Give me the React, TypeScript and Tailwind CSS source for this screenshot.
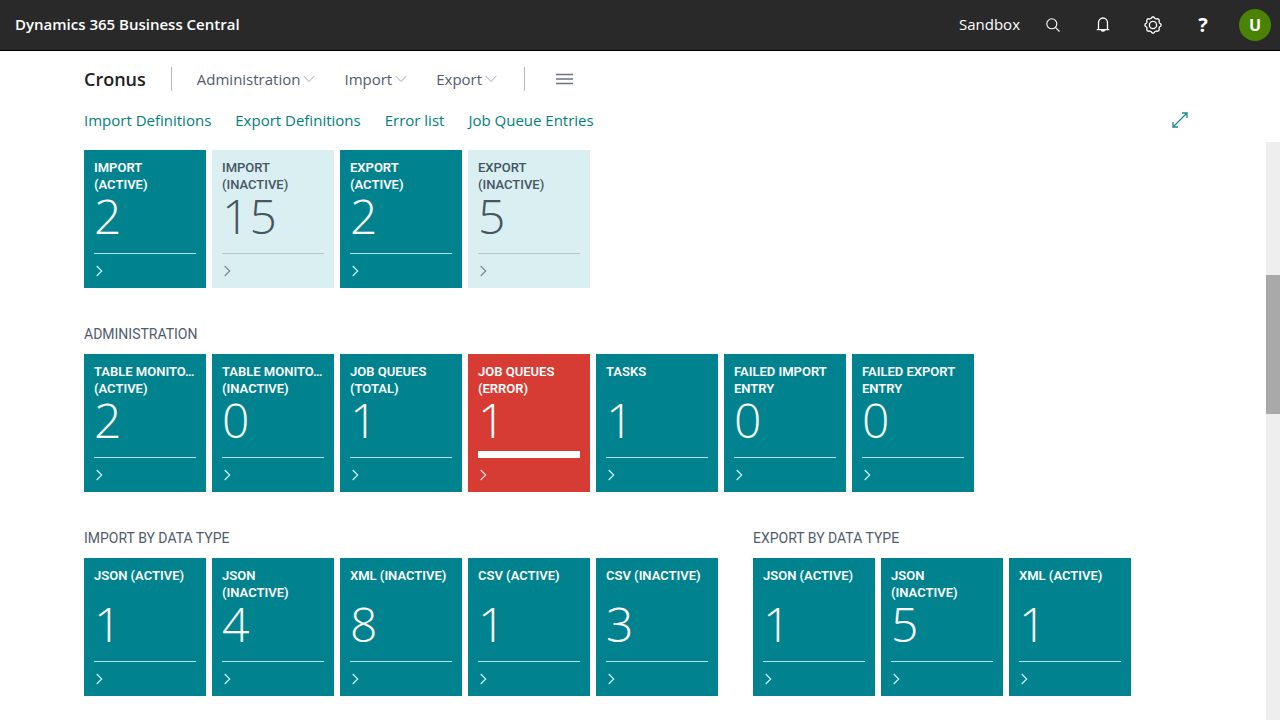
type Tone = 'active' | 'muted' | 'alert';

type Cue = {
  label: string[];
  value: number;
  tone?: Tone;
};

const definitions: Cue[] = [
  { label: ['IMPORT', '(ACTIVE)'], value: 2 },
  { label: ['IMPORT', '(INACTIVE)'], value: 15, tone: 'muted' },
  { label: ['EXPORT', '(ACTIVE)'], value: 2 },
  { label: ['EXPORT', '(INACTIVE)'], value: 5, tone: 'muted' },
];

const administration: Cue[] = [
  { label: ['TABLE MONITO…', '(ACTIVE)'], value: 2 },
  { label: ['TABLE MONITO…', '(INACTIVE)'], value: 0 },
  { label: ['JOB QUEUES', '(TOTAL)'], value: 1 },
  { label: ['JOB QUEUES', '(ERROR)'], value: 1, tone: 'alert' },
  { label: ['TASKS'], value: 1 },
  { label: ['FAILED IMPORT', 'ENTRY'], value: 0 },
  { label: ['FAILED EXPORT', 'ENTRY'], value: 0 },
];

const importTypes: Cue[] = [
  { label: ['JSON (ACTIVE)'], value: 1 },
  { label: ['JSON', '(INACTIVE)'], value: 4 },
  { label: ['XML (INACTIVE)'], value: 8 },
  { label: ['CSV (ACTIVE)'], value: 1 },
  { label: ['CSV (INACTIVE)'], value: 3 },
];

const exportTypes: Cue[] = [
  { label: ['JSON (ACTIVE)'], value: 1 },
  { label: ['JSON', '(INACTIVE)'], value: 5 },
  { label: ['XML (ACTIVE)'], value: 1 },
];

const tileTone: Record<Tone, string> = {
  active: 'bg-[#00838f] text-white',
  muted: 'bg-[#d9eff2] text-[#46555f]',
  alert: 'bg-[#d63c34] text-white',
};

const ruleTone: Record<Tone, string> = {
  active: 'h-px bg-[#b5e3e8]',
  muted: 'h-px bg-[#b3c5c9]',
  alert: 'h-[7px] bg-white',
};

const labelTone: Record<Tone, string> = {
  active: 'font-semibold',
  muted: 'font-medium',
  alert: 'font-semibold',
};

const chevronTone: Record<Tone, string> = {
  active: 'text-[#d3eef1]',
  muted: 'text-[#7d8c94]',
  alert: 'text-[#fbdedb]',
};

function Tile({ cue }: { cue: Cue }) {
  const tone = cue.tone ?? 'active';
  return (
    <a
      href="#"
      className={`flex h-[138px] w-[122px] shrink-0 flex-col px-[10px] pt-[9px] ${tileTone[tone]}`}
    >
      <span
        className={`h-[34px] font-['Roboto',sans-serif] text-[13px] leading-[17px] whitespace-nowrap ${labelTone[tone]}`}
      >
        {cue.label.map((line) => (
          <span key={line} className="block">
            {line}
          </span>
        ))}
      </span>
      <span className="h-[46px] font-['Open_Sans',sans-serif] text-[48px] leading-[46px] font-light">
        {cue.value}
      </span>
      <span className="flex h-[15px] flex-col justify-end">
        <span className={`block ${ruleTone[tone]}`} />
      </span>
      <svg
        viewBox="0 0 10 12"
        className={`mt-[11px] h-3 w-[10px] ${chevronTone[tone]}`}
        fill="none"
        stroke="currentColor"
        strokeWidth="1.2"
        aria-hidden="true"
      >
        <path d="M2.7 1 7.7 6 2.7 11" />
      </svg>
    </a>
  );
}

function Tiles({ title, cues }: { title?: string; cues: Cue[] }) {
  return (
    <section>
      {title && (
        <h2 className="mb-[10px] font-['Roboto',sans-serif] text-sm leading-5 text-[#505c6d]">
          {title}
        </h2>
      )}
      <div className="flex gap-[6px]">
        {cues.map((cue) => (
          <Tile key={cue.label.join(' ')} cue={cue} />
        ))}
      </div>
    </section>
  );
}

function MenuButton({ children }: { children: string }) {
  return (
    <button type="button" className="flex items-center gap-[3px] text-[#505c6d]">
      {children}
      <svg
        viewBox="0 0 12 8"
        className="h-2 w-3"
        fill="none"
        stroke="#a3a9b1"
        aria-hidden="true"
      >
        <path d="M.7 1 6 6.5 11.3 1" />
      </svg>
    </button>
  );
}

/* Cog outline: a ring with eight rounded lobes. */
const cogPath = (() => {
  const points: string[] = [];
  for (let i = 0; i < 96; i += 1) {
    const angle = (i / 96) * Math.PI * 2;
    const radius = 7.4 + 0.7 * Math.tanh(1.5 * Math.cos(angle * 8));
    points.push(
      `${(9 + radius * Math.cos(angle)).toFixed(2)} ${(9 + radius * Math.sin(angle)).toFixed(2)}`,
    );
  }
  return `M${points.join('L')}Z`;
})();

const iconButton = 'flex h-full w-[50px] items-center justify-center';

function TopBar() {
  return (
    <header className="flex h-[51px] items-center border-b border-black bg-[#292929] pr-[9px] pl-[15px] text-white">
      <h1 className="-mt-[2px] text-[15px] leading-5 font-semibold">
        Dynamics 365 Business Central
      </h1>
      <span className="-mt-[2px] mr-2 ml-auto text-[15px] leading-5">Sandbox</span>
      <button type="button" aria-label="Search" className={iconButton}>
        <svg viewBox="0 0 14 14" className="size-[14px]" fill="none" stroke="currentColor" strokeWidth="1.1">
          <circle cx="5.8" cy="5.8" r="5" />
          <path d="m9.4 9.4 4.1 4.1" />
        </svg>
      </button>
      <button type="button" aria-label="Notifications" className={iconButton}>
        <svg viewBox="0 0 14 16" className="h-4 w-[14px]" fill="none" stroke="currentColor" strokeWidth="1.3">
          <path d="M.7 12.7h12.6M2.5 12.7V5.8a4.5 4.8 0 0 1 9 0v6.9M5.3 13a1.8 1.8 0 0 0 3.4 0" />
        </svg>
      </button>
      <button type="button" aria-label="Settings" className={iconButton}>
        <svg viewBox="0 0 18 18" className="size-[18px]" fill="none" stroke="currentColor" strokeWidth="1.3">
          <path d={cogPath} />
          <circle cx="9" cy="9" r="3.6" />
        </svg>
      </button>
      <button type="button" aria-label="Help" className={`${iconButton} text-xl font-bold`}>
        ?
      </button>
      <button
        type="button"
        aria-label="Account"
        className="ml-[11px] flex size-8 items-center justify-center rounded-full bg-[#498205] text-base font-bold"
      >
        U
      </button>
    </header>
  );
}

export default function App() {
  return (
    <div className="flex min-h-screen flex-col bg-white font-['Open_Sans',sans-serif]">
      <TopBar />

      <nav className="flex h-[55px] items-center pt-px pl-[84px] text-[15px] leading-5">
        <span className="text-[18px] leading-6 font-semibold text-[#212121]">Cronus</span>
        <span className="mx-[25px] h-6 w-px bg-[#b9bdc2]" />
        <div className="flex gap-[29px]">
          <MenuButton>Administration</MenuButton>
          <MenuButton>Import</MenuButton>
          <MenuButton>Export</MenuButton>
        </div>
        <span className="mx-[27px] h-6 w-px bg-[#b9bdc2]" />
        <button type="button" aria-label="More" className="ml-1">
          <svg viewBox="0 0 17 12" className="h-3 w-[17px]" stroke="#6b7480" strokeWidth="1.4" aria-hidden="true">
            <path d="M0 1.5h17M0 6h17M0 10.5h17" />
          </svg>
        </button>
      </nav>

      <div className="mb-2 flex h-7 items-center gap-6 pr-[92px] pl-[84px] text-[15px] leading-5 text-[#00807c]">
        <a href="#">Import Definitions</a>
        <a href="#">Export Definitions</a>
        <a href="#">Error list</a>
        <a href="#">Job Queue Entries</a>
        <button type="button" aria-label="Expand" className="ml-auto">
          <svg viewBox="0 0 16 16" className="size-4" fill="none" stroke="#1f8a8c" strokeWidth="1.3" aria-hidden="true">
            <path d="M1 15 15 1M10 1h5v5M1 10v5h5" />
          </svg>
        </button>
      </div>

      <div className="flex grow">
        <main className="flex min-w-0 grow flex-col gap-9 pt-2 pb-[23px] pl-[84px]">
          <Tiles cues={definitions} />
          <Tiles title="ADMINISTRATION" cues={administration} />
          <div className="flex gap-[35px]">
            <Tiles title="IMPORT BY DATA TYPE" cues={importTypes} />
            <Tiles title="EXPORT BY DATA TYPE" cues={exportTypes} />
          </div>
        </main>
        <div className="w-[14px] shrink-0 bg-[#eeeeee] pt-[133px]" aria-hidden="true">
          <div className="h-[139px] bg-[#a9a9a9]" />
        </div>
      </div>
    </div>
  );
}
